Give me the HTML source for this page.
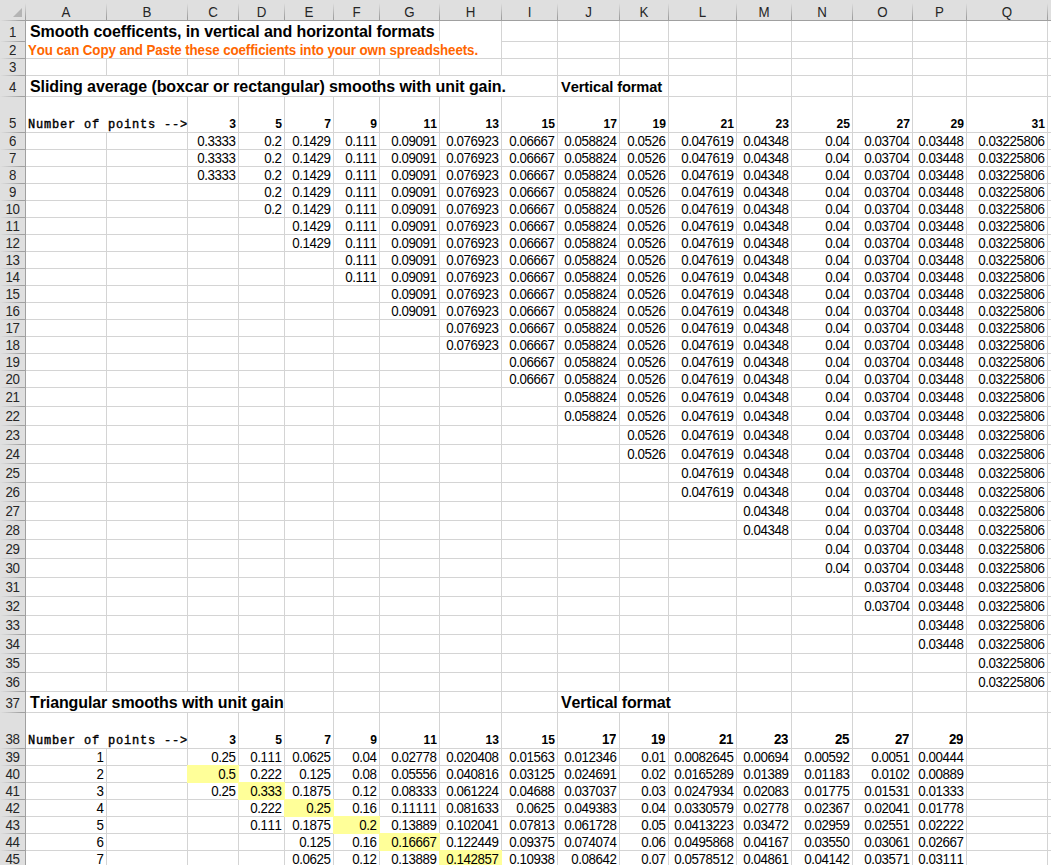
<!DOCTYPE html><html><head><meta charset="utf-8"><title>sheet</title><style>
html,body{margin:0;padding:0;background:#fff;overflow:hidden}
body{width:1051px;height:865px;position:relative;font-family:"Liberation Sans",sans-serif;color:#000;font-kerning:none;font-feature-settings:"kern" 0,"liga" 0}
div{position:absolute;white-space:nowrap;box-sizing:border-box}
.v{width:1px;background:#d4d4d4}
.h{height:1px;background:#d4d4d4}
.hv{width:1px;background:#a0a0a0}
.hh{height:1px;background:#a0a0a0}
.ch{top:3px;height:17px;font-size:13.33px;line-height:20px;text-align:center;color:#262626;transform:scaleY(1.07);transform-origin:50% 100%}
.rh{left:0;width:25px;font-size:13.33px;text-align:center;color:#262626;line-height:15px;letter-spacing:-0.41px;transform:scaleY(1.07);transform-origin:50% 100%}
.d{font-size:13.33px;line-height:15px;text-align:right;letter-spacing:-0.41px;transform:scaleY(1.07);transform-origin:50% 100%}
.cb{font-size:12.1px;font-weight:bold;line-height:15px;text-align:right;margin-top:1px}
.ab{font-size:13.33px;font-weight:bold;line-height:15px;text-align:right;letter-spacing:-0.41px;transform:scaleY(1.07);transform-origin:50% 100%}
.m{font-family:"Liberation Mono",monospace;font-weight:normal;-webkit-text-stroke:0.4px #000;font-size:12px;letter-spacing:0.8px;line-height:15px;background:#fff}
.t{font-weight:bold;font-size:16px;line-height:18px;background:#fff;letter-spacing:-0.1px}
.y{background:#ffff99}

</style></head><body>
<div class="v" style="left:106px;top:21px;height:844px"></div>
<div class="v" style="left:187px;top:21px;height:844px"></div>
<div class="v" style="left:238px;top:21px;height:844px"></div>
<div class="v" style="left:284px;top:21px;height:844px"></div>
<div class="v" style="left:333px;top:21px;height:844px"></div>
<div class="v" style="left:379px;top:21px;height:844px"></div>
<div class="v" style="left:439px;top:21px;height:844px"></div>
<div class="v" style="left:501px;top:21px;height:844px"></div>
<div class="v" style="left:557px;top:21px;height:844px"></div>
<div class="v" style="left:619px;top:21px;height:844px"></div>
<div class="v" style="left:668px;top:21px;height:844px"></div>
<div class="v" style="left:736px;top:21px;height:844px"></div>
<div class="v" style="left:791px;top:21px;height:844px"></div>
<div class="v" style="left:852px;top:21px;height:844px"></div>
<div class="v" style="left:912px;top:21px;height:844px"></div>
<div class="v" style="left:966px;top:21px;height:844px"></div>
<div class="v" style="left:1047px;top:21px;height:844px"></div>
<div class="h" style="top:41px;left:26px;width:1025px"></div>
<div class="h" style="top:58px;left:26px;width:1025px"></div>
<div class="h" style="top:75px;left:26px;width:1025px"></div>
<div class="h" style="top:96px;left:26px;width:1025px"></div>
<div class="h" style="top:132px;left:26px;width:1025px"></div>
<div class="h" style="top:149px;left:26px;width:1025px"></div>
<div class="h" style="top:166px;left:26px;width:1025px"></div>
<div class="h" style="top:183px;left:26px;width:1025px"></div>
<div class="h" style="top:200px;left:26px;width:1025px"></div>
<div class="h" style="top:217px;left:26px;width:1025px"></div>
<div class="h" style="top:234px;left:26px;width:1025px"></div>
<div class="h" style="top:251px;left:26px;width:1025px"></div>
<div class="h" style="top:268px;left:26px;width:1025px"></div>
<div class="h" style="top:285px;left:26px;width:1025px"></div>
<div class="h" style="top:302px;left:26px;width:1025px"></div>
<div class="h" style="top:319px;left:26px;width:1025px"></div>
<div class="h" style="top:336px;left:26px;width:1025px"></div>
<div class="h" style="top:353px;left:26px;width:1025px"></div>
<div class="h" style="top:370px;left:26px;width:1025px"></div>
<div class="h" style="top:387px;left:26px;width:1025px"></div>
<div class="h" style="top:406px;left:26px;width:1025px"></div>
<div class="h" style="top:425px;left:26px;width:1025px"></div>
<div class="h" style="top:444px;left:26px;width:1025px"></div>
<div class="h" style="top:463px;left:26px;width:1025px"></div>
<div class="h" style="top:482px;left:26px;width:1025px"></div>
<div class="h" style="top:501px;left:26px;width:1025px"></div>
<div class="h" style="top:520px;left:26px;width:1025px"></div>
<div class="h" style="top:539px;left:26px;width:1025px"></div>
<div class="h" style="top:558px;left:26px;width:1025px"></div>
<div class="h" style="top:577px;left:26px;width:1025px"></div>
<div class="h" style="top:596px;left:26px;width:1025px"></div>
<div class="h" style="top:615px;left:26px;width:1025px"></div>
<div class="h" style="top:634px;left:26px;width:1025px"></div>
<div class="h" style="top:653px;left:26px;width:1025px"></div>
<div class="h" style="top:672px;left:26px;width:1025px"></div>
<div class="h" style="top:691px;left:26px;width:1025px"></div>
<div class="h" style="top:712px;left:26px;width:1025px"></div>
<div class="h" style="top:748px;left:26px;width:1025px"></div>
<div class="h" style="top:765px;left:26px;width:1025px"></div>
<div class="h" style="top:782px;left:26px;width:1025px"></div>
<div class="h" style="top:799px;left:26px;width:1025px"></div>
<div class="h" style="top:816px;left:26px;width:1025px"></div>
<div class="h" style="top:833px;left:26px;width:1025px"></div>
<div class="h" style="top:850px;left:26px;width:1025px"></div>
<div style="left:0;top:0;width:1051px;height:20px;background:#dfdfdf"></div>
<div style="left:0;top:0;width:25px;height:865px;background:#dfdfdf"></div>
<div class="hh" style="left:25px;top:20px;width:1026px"></div>
<div style="left:0;top:20px;width:25px;height:1px;background:linear-gradient(to right,#dfdfdf,#a0a0a0 85%)"></div>
<div class="hv" style="left:25px;top:20px;height:845px"></div>
<div style="left:25px;top:3px;width:1px;height:17px;background:linear-gradient(to bottom,#dfdfdf,#a0a0a0 85%)"></div>
<div style="left:106px;top:3px;width:1px;height:17px;background:linear-gradient(to bottom,#dfdfdf,#a0a0a0 85%)"></div>
<div style="left:187px;top:3px;width:1px;height:17px;background:linear-gradient(to bottom,#dfdfdf,#a0a0a0 85%)"></div>
<div style="left:238px;top:3px;width:1px;height:17px;background:linear-gradient(to bottom,#dfdfdf,#a0a0a0 85%)"></div>
<div style="left:284px;top:3px;width:1px;height:17px;background:linear-gradient(to bottom,#dfdfdf,#a0a0a0 85%)"></div>
<div style="left:333px;top:3px;width:1px;height:17px;background:linear-gradient(to bottom,#dfdfdf,#a0a0a0 85%)"></div>
<div style="left:379px;top:3px;width:1px;height:17px;background:linear-gradient(to bottom,#dfdfdf,#a0a0a0 85%)"></div>
<div style="left:439px;top:3px;width:1px;height:17px;background:linear-gradient(to bottom,#dfdfdf,#a0a0a0 85%)"></div>
<div style="left:501px;top:3px;width:1px;height:17px;background:linear-gradient(to bottom,#dfdfdf,#a0a0a0 85%)"></div>
<div style="left:557px;top:3px;width:1px;height:17px;background:linear-gradient(to bottom,#dfdfdf,#a0a0a0 85%)"></div>
<div style="left:619px;top:3px;width:1px;height:17px;background:linear-gradient(to bottom,#dfdfdf,#a0a0a0 85%)"></div>
<div style="left:668px;top:3px;width:1px;height:17px;background:linear-gradient(to bottom,#dfdfdf,#a0a0a0 85%)"></div>
<div style="left:736px;top:3px;width:1px;height:17px;background:linear-gradient(to bottom,#dfdfdf,#a0a0a0 85%)"></div>
<div style="left:791px;top:3px;width:1px;height:17px;background:linear-gradient(to bottom,#dfdfdf,#a0a0a0 85%)"></div>
<div style="left:852px;top:3px;width:1px;height:17px;background:linear-gradient(to bottom,#dfdfdf,#a0a0a0 85%)"></div>
<div style="left:912px;top:3px;width:1px;height:17px;background:linear-gradient(to bottom,#dfdfdf,#a0a0a0 85%)"></div>
<div style="left:966px;top:3px;width:1px;height:17px;background:linear-gradient(to bottom,#dfdfdf,#a0a0a0 85%)"></div>
<div style="left:1047px;top:3px;width:1px;height:17px;background:linear-gradient(to bottom,#dfdfdf,#a0a0a0 85%)"></div>
<div style="left:0;top:41px;width:25px;height:1px;background:linear-gradient(to right,#dfdfdf,#a0a0a0 85%)"></div>
<div style="left:0;top:58px;width:25px;height:1px;background:linear-gradient(to right,#dfdfdf,#a0a0a0 85%)"></div>
<div style="left:0;top:75px;width:25px;height:1px;background:linear-gradient(to right,#dfdfdf,#a0a0a0 85%)"></div>
<div style="left:0;top:96px;width:25px;height:1px;background:linear-gradient(to right,#dfdfdf,#a0a0a0 85%)"></div>
<div style="left:0;top:132px;width:25px;height:1px;background:linear-gradient(to right,#dfdfdf,#a0a0a0 85%)"></div>
<div style="left:0;top:149px;width:25px;height:1px;background:linear-gradient(to right,#dfdfdf,#a0a0a0 85%)"></div>
<div style="left:0;top:166px;width:25px;height:1px;background:linear-gradient(to right,#dfdfdf,#a0a0a0 85%)"></div>
<div style="left:0;top:183px;width:25px;height:1px;background:linear-gradient(to right,#dfdfdf,#a0a0a0 85%)"></div>
<div style="left:0;top:200px;width:25px;height:1px;background:linear-gradient(to right,#dfdfdf,#a0a0a0 85%)"></div>
<div style="left:0;top:217px;width:25px;height:1px;background:linear-gradient(to right,#dfdfdf,#a0a0a0 85%)"></div>
<div style="left:0;top:234px;width:25px;height:1px;background:linear-gradient(to right,#dfdfdf,#a0a0a0 85%)"></div>
<div style="left:0;top:251px;width:25px;height:1px;background:linear-gradient(to right,#dfdfdf,#a0a0a0 85%)"></div>
<div style="left:0;top:268px;width:25px;height:1px;background:linear-gradient(to right,#dfdfdf,#a0a0a0 85%)"></div>
<div style="left:0;top:285px;width:25px;height:1px;background:linear-gradient(to right,#dfdfdf,#a0a0a0 85%)"></div>
<div style="left:0;top:302px;width:25px;height:1px;background:linear-gradient(to right,#dfdfdf,#a0a0a0 85%)"></div>
<div style="left:0;top:319px;width:25px;height:1px;background:linear-gradient(to right,#dfdfdf,#a0a0a0 85%)"></div>
<div style="left:0;top:336px;width:25px;height:1px;background:linear-gradient(to right,#dfdfdf,#a0a0a0 85%)"></div>
<div style="left:0;top:353px;width:25px;height:1px;background:linear-gradient(to right,#dfdfdf,#a0a0a0 85%)"></div>
<div style="left:0;top:370px;width:25px;height:1px;background:linear-gradient(to right,#dfdfdf,#a0a0a0 85%)"></div>
<div style="left:0;top:387px;width:25px;height:1px;background:linear-gradient(to right,#dfdfdf,#a0a0a0 85%)"></div>
<div style="left:0;top:406px;width:25px;height:1px;background:linear-gradient(to right,#dfdfdf,#a0a0a0 85%)"></div>
<div style="left:0;top:425px;width:25px;height:1px;background:linear-gradient(to right,#dfdfdf,#a0a0a0 85%)"></div>
<div style="left:0;top:444px;width:25px;height:1px;background:linear-gradient(to right,#dfdfdf,#a0a0a0 85%)"></div>
<div style="left:0;top:463px;width:25px;height:1px;background:linear-gradient(to right,#dfdfdf,#a0a0a0 85%)"></div>
<div style="left:0;top:482px;width:25px;height:1px;background:linear-gradient(to right,#dfdfdf,#a0a0a0 85%)"></div>
<div style="left:0;top:501px;width:25px;height:1px;background:linear-gradient(to right,#dfdfdf,#a0a0a0 85%)"></div>
<div style="left:0;top:520px;width:25px;height:1px;background:linear-gradient(to right,#dfdfdf,#a0a0a0 85%)"></div>
<div style="left:0;top:539px;width:25px;height:1px;background:linear-gradient(to right,#dfdfdf,#a0a0a0 85%)"></div>
<div style="left:0;top:558px;width:25px;height:1px;background:linear-gradient(to right,#dfdfdf,#a0a0a0 85%)"></div>
<div style="left:0;top:577px;width:25px;height:1px;background:linear-gradient(to right,#dfdfdf,#a0a0a0 85%)"></div>
<div style="left:0;top:596px;width:25px;height:1px;background:linear-gradient(to right,#dfdfdf,#a0a0a0 85%)"></div>
<div style="left:0;top:615px;width:25px;height:1px;background:linear-gradient(to right,#dfdfdf,#a0a0a0 85%)"></div>
<div style="left:0;top:634px;width:25px;height:1px;background:linear-gradient(to right,#dfdfdf,#a0a0a0 85%)"></div>
<div style="left:0;top:653px;width:25px;height:1px;background:linear-gradient(to right,#dfdfdf,#a0a0a0 85%)"></div>
<div style="left:0;top:672px;width:25px;height:1px;background:linear-gradient(to right,#dfdfdf,#a0a0a0 85%)"></div>
<div style="left:0;top:691px;width:25px;height:1px;background:linear-gradient(to right,#dfdfdf,#a0a0a0 85%)"></div>
<div style="left:0;top:712px;width:25px;height:1px;background:linear-gradient(to right,#dfdfdf,#a0a0a0 85%)"></div>
<div style="left:0;top:748px;width:25px;height:1px;background:linear-gradient(to right,#dfdfdf,#a0a0a0 85%)"></div>
<div style="left:0;top:765px;width:25px;height:1px;background:linear-gradient(to right,#dfdfdf,#a0a0a0 85%)"></div>
<div style="left:0;top:782px;width:25px;height:1px;background:linear-gradient(to right,#dfdfdf,#a0a0a0 85%)"></div>
<div style="left:0;top:799px;width:25px;height:1px;background:linear-gradient(to right,#dfdfdf,#a0a0a0 85%)"></div>
<div style="left:0;top:816px;width:25px;height:1px;background:linear-gradient(to right,#dfdfdf,#a0a0a0 85%)"></div>
<div style="left:0;top:833px;width:25px;height:1px;background:linear-gradient(to right,#dfdfdf,#a0a0a0 85%)"></div>
<div style="left:0;top:850px;width:25px;height:1px;background:linear-gradient(to right,#dfdfdf,#a0a0a0 85%)"></div>
<svg style="position:absolute;left:13px;top:8px" width="10" height="10"><path d="M9 0 L9 9 L0 9 Z" fill="#b4b4b4"/></svg>
<div class="ch" style="left:26px;width:80px">A</div>
<div class="ch" style="left:107px;width:80px">B</div>
<div class="ch" style="left:188px;width:50px">C</div>
<div class="ch" style="left:239px;width:45px">D</div>
<div class="ch" style="left:285px;width:48px">E</div>
<div class="ch" style="left:334px;width:45px">F</div>
<div class="ch" style="left:380px;width:59px">G</div>
<div class="ch" style="left:440px;width:61px">H</div>
<div class="ch" style="left:502px;width:55px">I</div>
<div class="ch" style="left:558px;width:61px">J</div>
<div class="ch" style="left:620px;width:48px">K</div>
<div class="ch" style="left:669px;width:67px">L</div>
<div class="ch" style="left:737px;width:54px">M</div>
<div class="ch" style="left:792px;width:60px">N</div>
<div class="ch" style="left:853px;width:59px">O</div>
<div class="ch" style="left:913px;width:53px">P</div>
<div class="ch" style="left:967px;width:80px">Q</div>
<div class="rh" style="top:25px;height:15px">1</div>
<div class="rh" style="top:43px;height:15px">2</div>
<div class="rh" style="top:60px;height:15px">3</div>
<div class="rh" style="top:80px;height:15px">4</div>
<div class="rh" style="top:116px;height:15px">5</div>
<div class="rh" style="top:134px;height:15px">6</div>
<div class="rh" style="top:151px;height:15px">7</div>
<div class="rh" style="top:168px;height:15px">8</div>
<div class="rh" style="top:185px;height:15px">9</div>
<div class="rh" style="top:202px;height:15px">10</div>
<div class="rh" style="top:219px;height:15px">11</div>
<div class="rh" style="top:236px;height:15px">12</div>
<div class="rh" style="top:253px;height:15px">13</div>
<div class="rh" style="top:270px;height:15px">14</div>
<div class="rh" style="top:287px;height:15px">15</div>
<div class="rh" style="top:304px;height:15px">16</div>
<div class="rh" style="top:321px;height:15px">17</div>
<div class="rh" style="top:338px;height:15px">18</div>
<div class="rh" style="top:355px;height:15px">19</div>
<div class="rh" style="top:372px;height:15px">20</div>
<div class="rh" style="top:390px;height:15px">21</div>
<div class="rh" style="top:409px;height:15px">22</div>
<div class="rh" style="top:428px;height:15px">23</div>
<div class="rh" style="top:447px;height:15px">24</div>
<div class="rh" style="top:466px;height:15px">25</div>
<div class="rh" style="top:485px;height:15px">26</div>
<div class="rh" style="top:504px;height:15px">27</div>
<div class="rh" style="top:523px;height:15px">28</div>
<div class="rh" style="top:542px;height:15px">29</div>
<div class="rh" style="top:561px;height:15px">30</div>
<div class="rh" style="top:580px;height:15px">31</div>
<div class="rh" style="top:599px;height:15px">32</div>
<div class="rh" style="top:618px;height:15px">33</div>
<div class="rh" style="top:637px;height:15px">34</div>
<div class="rh" style="top:656px;height:15px">35</div>
<div class="rh" style="top:675px;height:15px">36</div>
<div class="rh" style="top:696px;height:15px">37</div>
<div class="rh" style="top:732px;height:15px">38</div>
<div class="rh" style="top:750px;height:15px">39</div>
<div class="rh" style="top:767px;height:15px">40</div>
<div class="rh" style="top:784px;height:15px">41</div>
<div class="rh" style="top:801px;height:15px">42</div>
<div class="rh" style="top:818px;height:15px">43</div>
<div class="rh" style="top:835px;height:15px">44</div>
<div class="rh" style="top:852px;height:15px">45</div>
<div class="t" style="left:26px;width:413px;top:21px;height:20px;padding-left:4px;padding-top:2px;letter-spacing:-0.082px">Smooth coefficents, in vertical and horizontal formats</div>
<div class="t" style="left:26px;width:475px;top:42px;height:16px;padding-left:2px;font-size:13.33px;color:#ff6600;line-height:15px;padding-top:1px;letter-spacing:-0.09px;transform:scaleY(1.07);transform-origin:50% 100%">You can Copy and Paste these coefficients into your own spreadsheets.</div>
<div class="t" style="left:26px;width:531px;top:76px;height:20px;padding-left:4px;padding-top:2px;letter-spacing:-0.082px">Sliding average (boxcar or rectangular) smooths with unit gain.</div>
<div class="t" style="left:558px;width:110px;top:76px;height:20px;padding-left:3px;font-size:14.67px;padding-top:2px">Vertical format</div>
<div class="t" style="left:26px;width:258px;top:692px;height:20px;padding-left:4px;padding-top:2px;letter-spacing:-0.1px">Triangular smooths with unit gain</div>
<div class="t" style="left:558px;width:178px;top:692px;height:20px;padding-left:3px;padding-top:2px;letter-spacing:-0.16px">Vertical format</div>
<div class="m" style="left:26px;width:161px;top:97px;height:35px;padding-left:2px;padding-top:21px">Number of points --&gt;</div>
<div class="m" style="left:26px;width:161px;top:713px;height:35px;padding-left:2px;padding-top:21px">Number of points --&gt;</div>
<div class="cb" style="left:188px;width:50px;top:97px;height:35px;padding-right:2px;padding-top:19px">3</div>
<div class="d" style="left:188px;width:50px;top:133px;height:16px;padding-right:2.4px;padding-top:1px">0.3333</div>
<div class="d" style="left:188px;width:50px;top:150px;height:16px;padding-right:2.4px;padding-top:1px">0.3333</div>
<div class="d" style="left:188px;width:50px;top:167px;height:16px;padding-right:2.4px;padding-top:1px">0.3333</div>
<div class="cb" style="left:239px;width:45px;top:97px;height:35px;padding-right:2px;padding-top:19px">5</div>
<div class="d" style="left:239px;width:45px;top:133px;height:16px;padding-right:2.4px;padding-top:1px">0.2</div>
<div class="d" style="left:239px;width:45px;top:150px;height:16px;padding-right:2.4px;padding-top:1px">0.2</div>
<div class="d" style="left:239px;width:45px;top:167px;height:16px;padding-right:2.4px;padding-top:1px">0.2</div>
<div class="d" style="left:239px;width:45px;top:184px;height:16px;padding-right:2.4px;padding-top:1px">0.2</div>
<div class="d" style="left:239px;width:45px;top:201px;height:16px;padding-right:2.4px;padding-top:1px">0.2</div>
<div class="cb" style="left:285px;width:48px;top:97px;height:35px;padding-right:2px;padding-top:19px">7</div>
<div class="d" style="left:285px;width:48px;top:133px;height:16px;padding-right:2.4px;padding-top:1px">0.1429</div>
<div class="d" style="left:285px;width:48px;top:150px;height:16px;padding-right:2.4px;padding-top:1px">0.1429</div>
<div class="d" style="left:285px;width:48px;top:167px;height:16px;padding-right:2.4px;padding-top:1px">0.1429</div>
<div class="d" style="left:285px;width:48px;top:184px;height:16px;padding-right:2.4px;padding-top:1px">0.1429</div>
<div class="d" style="left:285px;width:48px;top:201px;height:16px;padding-right:2.4px;padding-top:1px">0.1429</div>
<div class="d" style="left:285px;width:48px;top:218px;height:16px;padding-right:2.4px;padding-top:1px">0.1429</div>
<div class="d" style="left:285px;width:48px;top:235px;height:16px;padding-right:2.4px;padding-top:1px">0.1429</div>
<div class="cb" style="left:334px;width:45px;top:97px;height:35px;padding-right:2px;padding-top:19px">9</div>
<div class="d" style="left:334px;width:45px;top:133px;height:16px;padding-right:2.4px;padding-top:1px">0.111</div>
<div class="d" style="left:334px;width:45px;top:150px;height:16px;padding-right:2.4px;padding-top:1px">0.111</div>
<div class="d" style="left:334px;width:45px;top:167px;height:16px;padding-right:2.4px;padding-top:1px">0.111</div>
<div class="d" style="left:334px;width:45px;top:184px;height:16px;padding-right:2.4px;padding-top:1px">0.111</div>
<div class="d" style="left:334px;width:45px;top:201px;height:16px;padding-right:2.4px;padding-top:1px">0.111</div>
<div class="d" style="left:334px;width:45px;top:218px;height:16px;padding-right:2.4px;padding-top:1px">0.111</div>
<div class="d" style="left:334px;width:45px;top:235px;height:16px;padding-right:2.4px;padding-top:1px">0.111</div>
<div class="d" style="left:334px;width:45px;top:252px;height:16px;padding-right:2.4px;padding-top:1px">0.111</div>
<div class="d" style="left:334px;width:45px;top:269px;height:16px;padding-right:2.4px;padding-top:1px">0.111</div>
<div class="cb" style="left:380px;width:59px;top:97px;height:35px;padding-right:2px;padding-top:19px">11</div>
<div class="d" style="left:380px;width:59px;top:133px;height:16px;padding-right:2.4px;padding-top:1px">0.09091</div>
<div class="d" style="left:380px;width:59px;top:150px;height:16px;padding-right:2.4px;padding-top:1px">0.09091</div>
<div class="d" style="left:380px;width:59px;top:167px;height:16px;padding-right:2.4px;padding-top:1px">0.09091</div>
<div class="d" style="left:380px;width:59px;top:184px;height:16px;padding-right:2.4px;padding-top:1px">0.09091</div>
<div class="d" style="left:380px;width:59px;top:201px;height:16px;padding-right:2.4px;padding-top:1px">0.09091</div>
<div class="d" style="left:380px;width:59px;top:218px;height:16px;padding-right:2.4px;padding-top:1px">0.09091</div>
<div class="d" style="left:380px;width:59px;top:235px;height:16px;padding-right:2.4px;padding-top:1px">0.09091</div>
<div class="d" style="left:380px;width:59px;top:252px;height:16px;padding-right:2.4px;padding-top:1px">0.09091</div>
<div class="d" style="left:380px;width:59px;top:269px;height:16px;padding-right:2.4px;padding-top:1px">0.09091</div>
<div class="d" style="left:380px;width:59px;top:286px;height:16px;padding-right:2.4px;padding-top:1px">0.09091</div>
<div class="d" style="left:380px;width:59px;top:303px;height:16px;padding-right:2.4px;padding-top:1px">0.09091</div>
<div class="cb" style="left:440px;width:61px;top:97px;height:35px;padding-right:2px;padding-top:19px">13</div>
<div class="d" style="left:440px;width:61px;top:133px;height:16px;padding-right:2.4px;padding-top:1px">0.076923</div>
<div class="d" style="left:440px;width:61px;top:150px;height:16px;padding-right:2.4px;padding-top:1px">0.076923</div>
<div class="d" style="left:440px;width:61px;top:167px;height:16px;padding-right:2.4px;padding-top:1px">0.076923</div>
<div class="d" style="left:440px;width:61px;top:184px;height:16px;padding-right:2.4px;padding-top:1px">0.076923</div>
<div class="d" style="left:440px;width:61px;top:201px;height:16px;padding-right:2.4px;padding-top:1px">0.076923</div>
<div class="d" style="left:440px;width:61px;top:218px;height:16px;padding-right:2.4px;padding-top:1px">0.076923</div>
<div class="d" style="left:440px;width:61px;top:235px;height:16px;padding-right:2.4px;padding-top:1px">0.076923</div>
<div class="d" style="left:440px;width:61px;top:252px;height:16px;padding-right:2.4px;padding-top:1px">0.076923</div>
<div class="d" style="left:440px;width:61px;top:269px;height:16px;padding-right:2.4px;padding-top:1px">0.076923</div>
<div class="d" style="left:440px;width:61px;top:286px;height:16px;padding-right:2.4px;padding-top:1px">0.076923</div>
<div class="d" style="left:440px;width:61px;top:303px;height:16px;padding-right:2.4px;padding-top:1px">0.076923</div>
<div class="d" style="left:440px;width:61px;top:320px;height:16px;padding-right:2.4px;padding-top:1px">0.076923</div>
<div class="d" style="left:440px;width:61px;top:337px;height:16px;padding-right:2.4px;padding-top:1px">0.076923</div>
<div class="cb" style="left:502px;width:55px;top:97px;height:35px;padding-right:2px;padding-top:19px">15</div>
<div class="d" style="left:502px;width:55px;top:133px;height:16px;padding-right:2.4px;padding-top:1px">0.06667</div>
<div class="d" style="left:502px;width:55px;top:150px;height:16px;padding-right:2.4px;padding-top:1px">0.06667</div>
<div class="d" style="left:502px;width:55px;top:167px;height:16px;padding-right:2.4px;padding-top:1px">0.06667</div>
<div class="d" style="left:502px;width:55px;top:184px;height:16px;padding-right:2.4px;padding-top:1px">0.06667</div>
<div class="d" style="left:502px;width:55px;top:201px;height:16px;padding-right:2.4px;padding-top:1px">0.06667</div>
<div class="d" style="left:502px;width:55px;top:218px;height:16px;padding-right:2.4px;padding-top:1px">0.06667</div>
<div class="d" style="left:502px;width:55px;top:235px;height:16px;padding-right:2.4px;padding-top:1px">0.06667</div>
<div class="d" style="left:502px;width:55px;top:252px;height:16px;padding-right:2.4px;padding-top:1px">0.06667</div>
<div class="d" style="left:502px;width:55px;top:269px;height:16px;padding-right:2.4px;padding-top:1px">0.06667</div>
<div class="d" style="left:502px;width:55px;top:286px;height:16px;padding-right:2.4px;padding-top:1px">0.06667</div>
<div class="d" style="left:502px;width:55px;top:303px;height:16px;padding-right:2.4px;padding-top:1px">0.06667</div>
<div class="d" style="left:502px;width:55px;top:320px;height:16px;padding-right:2.4px;padding-top:1px">0.06667</div>
<div class="d" style="left:502px;width:55px;top:337px;height:16px;padding-right:2.4px;padding-top:1px">0.06667</div>
<div class="d" style="left:502px;width:55px;top:354px;height:16px;padding-right:2.4px;padding-top:1px">0.06667</div>
<div class="d" style="left:502px;width:55px;top:371px;height:16px;padding-right:2.4px;padding-top:1px">0.06667</div>
<div class="cb" style="left:558px;width:61px;top:97px;height:35px;padding-right:2px;padding-top:19px">17</div>
<div class="d" style="left:558px;width:61px;top:133px;height:16px;padding-right:2.4px;padding-top:1px">0.058824</div>
<div class="d" style="left:558px;width:61px;top:150px;height:16px;padding-right:2.4px;padding-top:1px">0.058824</div>
<div class="d" style="left:558px;width:61px;top:167px;height:16px;padding-right:2.4px;padding-top:1px">0.058824</div>
<div class="d" style="left:558px;width:61px;top:184px;height:16px;padding-right:2.4px;padding-top:1px">0.058824</div>
<div class="d" style="left:558px;width:61px;top:201px;height:16px;padding-right:2.4px;padding-top:1px">0.058824</div>
<div class="d" style="left:558px;width:61px;top:218px;height:16px;padding-right:2.4px;padding-top:1px">0.058824</div>
<div class="d" style="left:558px;width:61px;top:235px;height:16px;padding-right:2.4px;padding-top:1px">0.058824</div>
<div class="d" style="left:558px;width:61px;top:252px;height:16px;padding-right:2.4px;padding-top:1px">0.058824</div>
<div class="d" style="left:558px;width:61px;top:269px;height:16px;padding-right:2.4px;padding-top:1px">0.058824</div>
<div class="d" style="left:558px;width:61px;top:286px;height:16px;padding-right:2.4px;padding-top:1px">0.058824</div>
<div class="d" style="left:558px;width:61px;top:303px;height:16px;padding-right:2.4px;padding-top:1px">0.058824</div>
<div class="d" style="left:558px;width:61px;top:320px;height:16px;padding-right:2.4px;padding-top:1px">0.058824</div>
<div class="d" style="left:558px;width:61px;top:337px;height:16px;padding-right:2.4px;padding-top:1px">0.058824</div>
<div class="d" style="left:558px;width:61px;top:354px;height:16px;padding-right:2.4px;padding-top:1px">0.058824</div>
<div class="d" style="left:558px;width:61px;top:371px;height:16px;padding-right:2.4px;padding-top:1px">0.058824</div>
<div class="d" style="left:558px;width:61px;top:388px;height:18px;padding-right:2.4px;padding-top:2px">0.058824</div>
<div class="d" style="left:558px;width:61px;top:407px;height:18px;padding-right:2.4px;padding-top:2px">0.058824</div>
<div class="cb" style="left:620px;width:48px;top:97px;height:35px;padding-right:2px;padding-top:19px">19</div>
<div class="d" style="left:620px;width:48px;top:133px;height:16px;padding-right:2.4px;padding-top:1px">0.0526</div>
<div class="d" style="left:620px;width:48px;top:150px;height:16px;padding-right:2.4px;padding-top:1px">0.0526</div>
<div class="d" style="left:620px;width:48px;top:167px;height:16px;padding-right:2.4px;padding-top:1px">0.0526</div>
<div class="d" style="left:620px;width:48px;top:184px;height:16px;padding-right:2.4px;padding-top:1px">0.0526</div>
<div class="d" style="left:620px;width:48px;top:201px;height:16px;padding-right:2.4px;padding-top:1px">0.0526</div>
<div class="d" style="left:620px;width:48px;top:218px;height:16px;padding-right:2.4px;padding-top:1px">0.0526</div>
<div class="d" style="left:620px;width:48px;top:235px;height:16px;padding-right:2.4px;padding-top:1px">0.0526</div>
<div class="d" style="left:620px;width:48px;top:252px;height:16px;padding-right:2.4px;padding-top:1px">0.0526</div>
<div class="d" style="left:620px;width:48px;top:269px;height:16px;padding-right:2.4px;padding-top:1px">0.0526</div>
<div class="d" style="left:620px;width:48px;top:286px;height:16px;padding-right:2.4px;padding-top:1px">0.0526</div>
<div class="d" style="left:620px;width:48px;top:303px;height:16px;padding-right:2.4px;padding-top:1px">0.0526</div>
<div class="d" style="left:620px;width:48px;top:320px;height:16px;padding-right:2.4px;padding-top:1px">0.0526</div>
<div class="d" style="left:620px;width:48px;top:337px;height:16px;padding-right:2.4px;padding-top:1px">0.0526</div>
<div class="d" style="left:620px;width:48px;top:354px;height:16px;padding-right:2.4px;padding-top:1px">0.0526</div>
<div class="d" style="left:620px;width:48px;top:371px;height:16px;padding-right:2.4px;padding-top:1px">0.0526</div>
<div class="d" style="left:620px;width:48px;top:388px;height:18px;padding-right:2.4px;padding-top:2px">0.0526</div>
<div class="d" style="left:620px;width:48px;top:407px;height:18px;padding-right:2.4px;padding-top:2px">0.0526</div>
<div class="d" style="left:620px;width:48px;top:426px;height:18px;padding-right:2.4px;padding-top:2px">0.0526</div>
<div class="d" style="left:620px;width:48px;top:445px;height:18px;padding-right:2.4px;padding-top:2px">0.0526</div>
<div class="cb" style="left:669px;width:67px;top:97px;height:35px;padding-right:2px;padding-top:19px">21</div>
<div class="d" style="left:669px;width:67px;top:133px;height:16px;padding-right:2.4px;padding-top:1px">0.047619</div>
<div class="d" style="left:669px;width:67px;top:150px;height:16px;padding-right:2.4px;padding-top:1px">0.047619</div>
<div class="d" style="left:669px;width:67px;top:167px;height:16px;padding-right:2.4px;padding-top:1px">0.047619</div>
<div class="d" style="left:669px;width:67px;top:184px;height:16px;padding-right:2.4px;padding-top:1px">0.047619</div>
<div class="d" style="left:669px;width:67px;top:201px;height:16px;padding-right:2.4px;padding-top:1px">0.047619</div>
<div class="d" style="left:669px;width:67px;top:218px;height:16px;padding-right:2.4px;padding-top:1px">0.047619</div>
<div class="d" style="left:669px;width:67px;top:235px;height:16px;padding-right:2.4px;padding-top:1px">0.047619</div>
<div class="d" style="left:669px;width:67px;top:252px;height:16px;padding-right:2.4px;padding-top:1px">0.047619</div>
<div class="d" style="left:669px;width:67px;top:269px;height:16px;padding-right:2.4px;padding-top:1px">0.047619</div>
<div class="d" style="left:669px;width:67px;top:286px;height:16px;padding-right:2.4px;padding-top:1px">0.047619</div>
<div class="d" style="left:669px;width:67px;top:303px;height:16px;padding-right:2.4px;padding-top:1px">0.047619</div>
<div class="d" style="left:669px;width:67px;top:320px;height:16px;padding-right:2.4px;padding-top:1px">0.047619</div>
<div class="d" style="left:669px;width:67px;top:337px;height:16px;padding-right:2.4px;padding-top:1px">0.047619</div>
<div class="d" style="left:669px;width:67px;top:354px;height:16px;padding-right:2.4px;padding-top:1px">0.047619</div>
<div class="d" style="left:669px;width:67px;top:371px;height:16px;padding-right:2.4px;padding-top:1px">0.047619</div>
<div class="d" style="left:669px;width:67px;top:388px;height:18px;padding-right:2.4px;padding-top:2px">0.047619</div>
<div class="d" style="left:669px;width:67px;top:407px;height:18px;padding-right:2.4px;padding-top:2px">0.047619</div>
<div class="d" style="left:669px;width:67px;top:426px;height:18px;padding-right:2.4px;padding-top:2px">0.047619</div>
<div class="d" style="left:669px;width:67px;top:445px;height:18px;padding-right:2.4px;padding-top:2px">0.047619</div>
<div class="d" style="left:669px;width:67px;top:464px;height:18px;padding-right:2.4px;padding-top:2px">0.047619</div>
<div class="d" style="left:669px;width:67px;top:483px;height:18px;padding-right:2.4px;padding-top:2px">0.047619</div>
<div class="cb" style="left:737px;width:54px;top:97px;height:35px;padding-right:2px;padding-top:19px">23</div>
<div class="d" style="left:737px;width:54px;top:133px;height:16px;padding-right:2.4px;padding-top:1px">0.04348</div>
<div class="d" style="left:737px;width:54px;top:150px;height:16px;padding-right:2.4px;padding-top:1px">0.04348</div>
<div class="d" style="left:737px;width:54px;top:167px;height:16px;padding-right:2.4px;padding-top:1px">0.04348</div>
<div class="d" style="left:737px;width:54px;top:184px;height:16px;padding-right:2.4px;padding-top:1px">0.04348</div>
<div class="d" style="left:737px;width:54px;top:201px;height:16px;padding-right:2.4px;padding-top:1px">0.04348</div>
<div class="d" style="left:737px;width:54px;top:218px;height:16px;padding-right:2.4px;padding-top:1px">0.04348</div>
<div class="d" style="left:737px;width:54px;top:235px;height:16px;padding-right:2.4px;padding-top:1px">0.04348</div>
<div class="d" style="left:737px;width:54px;top:252px;height:16px;padding-right:2.4px;padding-top:1px">0.04348</div>
<div class="d" style="left:737px;width:54px;top:269px;height:16px;padding-right:2.4px;padding-top:1px">0.04348</div>
<div class="d" style="left:737px;width:54px;top:286px;height:16px;padding-right:2.4px;padding-top:1px">0.04348</div>
<div class="d" style="left:737px;width:54px;top:303px;height:16px;padding-right:2.4px;padding-top:1px">0.04348</div>
<div class="d" style="left:737px;width:54px;top:320px;height:16px;padding-right:2.4px;padding-top:1px">0.04348</div>
<div class="d" style="left:737px;width:54px;top:337px;height:16px;padding-right:2.4px;padding-top:1px">0.04348</div>
<div class="d" style="left:737px;width:54px;top:354px;height:16px;padding-right:2.4px;padding-top:1px">0.04348</div>
<div class="d" style="left:737px;width:54px;top:371px;height:16px;padding-right:2.4px;padding-top:1px">0.04348</div>
<div class="d" style="left:737px;width:54px;top:388px;height:18px;padding-right:2.4px;padding-top:2px">0.04348</div>
<div class="d" style="left:737px;width:54px;top:407px;height:18px;padding-right:2.4px;padding-top:2px">0.04348</div>
<div class="d" style="left:737px;width:54px;top:426px;height:18px;padding-right:2.4px;padding-top:2px">0.04348</div>
<div class="d" style="left:737px;width:54px;top:445px;height:18px;padding-right:2.4px;padding-top:2px">0.04348</div>
<div class="d" style="left:737px;width:54px;top:464px;height:18px;padding-right:2.4px;padding-top:2px">0.04348</div>
<div class="d" style="left:737px;width:54px;top:483px;height:18px;padding-right:2.4px;padding-top:2px">0.04348</div>
<div class="d" style="left:737px;width:54px;top:502px;height:18px;padding-right:2.4px;padding-top:2px">0.04348</div>
<div class="d" style="left:737px;width:54px;top:521px;height:18px;padding-right:2.4px;padding-top:2px">0.04348</div>
<div class="cb" style="left:792px;width:60px;top:97px;height:35px;padding-right:2px;padding-top:19px">25</div>
<div class="d" style="left:792px;width:60px;top:133px;height:16px;padding-right:2.4px;padding-top:1px">0.04</div>
<div class="d" style="left:792px;width:60px;top:150px;height:16px;padding-right:2.4px;padding-top:1px">0.04</div>
<div class="d" style="left:792px;width:60px;top:167px;height:16px;padding-right:2.4px;padding-top:1px">0.04</div>
<div class="d" style="left:792px;width:60px;top:184px;height:16px;padding-right:2.4px;padding-top:1px">0.04</div>
<div class="d" style="left:792px;width:60px;top:201px;height:16px;padding-right:2.4px;padding-top:1px">0.04</div>
<div class="d" style="left:792px;width:60px;top:218px;height:16px;padding-right:2.4px;padding-top:1px">0.04</div>
<div class="d" style="left:792px;width:60px;top:235px;height:16px;padding-right:2.4px;padding-top:1px">0.04</div>
<div class="d" style="left:792px;width:60px;top:252px;height:16px;padding-right:2.4px;padding-top:1px">0.04</div>
<div class="d" style="left:792px;width:60px;top:269px;height:16px;padding-right:2.4px;padding-top:1px">0.04</div>
<div class="d" style="left:792px;width:60px;top:286px;height:16px;padding-right:2.4px;padding-top:1px">0.04</div>
<div class="d" style="left:792px;width:60px;top:303px;height:16px;padding-right:2.4px;padding-top:1px">0.04</div>
<div class="d" style="left:792px;width:60px;top:320px;height:16px;padding-right:2.4px;padding-top:1px">0.04</div>
<div class="d" style="left:792px;width:60px;top:337px;height:16px;padding-right:2.4px;padding-top:1px">0.04</div>
<div class="d" style="left:792px;width:60px;top:354px;height:16px;padding-right:2.4px;padding-top:1px">0.04</div>
<div class="d" style="left:792px;width:60px;top:371px;height:16px;padding-right:2.4px;padding-top:1px">0.04</div>
<div class="d" style="left:792px;width:60px;top:388px;height:18px;padding-right:2.4px;padding-top:2px">0.04</div>
<div class="d" style="left:792px;width:60px;top:407px;height:18px;padding-right:2.4px;padding-top:2px">0.04</div>
<div class="d" style="left:792px;width:60px;top:426px;height:18px;padding-right:2.4px;padding-top:2px">0.04</div>
<div class="d" style="left:792px;width:60px;top:445px;height:18px;padding-right:2.4px;padding-top:2px">0.04</div>
<div class="d" style="left:792px;width:60px;top:464px;height:18px;padding-right:2.4px;padding-top:2px">0.04</div>
<div class="d" style="left:792px;width:60px;top:483px;height:18px;padding-right:2.4px;padding-top:2px">0.04</div>
<div class="d" style="left:792px;width:60px;top:502px;height:18px;padding-right:2.4px;padding-top:2px">0.04</div>
<div class="d" style="left:792px;width:60px;top:521px;height:18px;padding-right:2.4px;padding-top:2px">0.04</div>
<div class="d" style="left:792px;width:60px;top:540px;height:18px;padding-right:2.4px;padding-top:2px">0.04</div>
<div class="d" style="left:792px;width:60px;top:559px;height:18px;padding-right:2.4px;padding-top:2px">0.04</div>
<div class="cb" style="left:853px;width:59px;top:97px;height:35px;padding-right:2px;padding-top:19px">27</div>
<div class="d" style="left:853px;width:59px;top:133px;height:16px;padding-right:2.4px;padding-top:1px">0.03704</div>
<div class="d" style="left:853px;width:59px;top:150px;height:16px;padding-right:2.4px;padding-top:1px">0.03704</div>
<div class="d" style="left:853px;width:59px;top:167px;height:16px;padding-right:2.4px;padding-top:1px">0.03704</div>
<div class="d" style="left:853px;width:59px;top:184px;height:16px;padding-right:2.4px;padding-top:1px">0.03704</div>
<div class="d" style="left:853px;width:59px;top:201px;height:16px;padding-right:2.4px;padding-top:1px">0.03704</div>
<div class="d" style="left:853px;width:59px;top:218px;height:16px;padding-right:2.4px;padding-top:1px">0.03704</div>
<div class="d" style="left:853px;width:59px;top:235px;height:16px;padding-right:2.4px;padding-top:1px">0.03704</div>
<div class="d" style="left:853px;width:59px;top:252px;height:16px;padding-right:2.4px;padding-top:1px">0.03704</div>
<div class="d" style="left:853px;width:59px;top:269px;height:16px;padding-right:2.4px;padding-top:1px">0.03704</div>
<div class="d" style="left:853px;width:59px;top:286px;height:16px;padding-right:2.4px;padding-top:1px">0.03704</div>
<div class="d" style="left:853px;width:59px;top:303px;height:16px;padding-right:2.4px;padding-top:1px">0.03704</div>
<div class="d" style="left:853px;width:59px;top:320px;height:16px;padding-right:2.4px;padding-top:1px">0.03704</div>
<div class="d" style="left:853px;width:59px;top:337px;height:16px;padding-right:2.4px;padding-top:1px">0.03704</div>
<div class="d" style="left:853px;width:59px;top:354px;height:16px;padding-right:2.4px;padding-top:1px">0.03704</div>
<div class="d" style="left:853px;width:59px;top:371px;height:16px;padding-right:2.4px;padding-top:1px">0.03704</div>
<div class="d" style="left:853px;width:59px;top:388px;height:18px;padding-right:2.4px;padding-top:2px">0.03704</div>
<div class="d" style="left:853px;width:59px;top:407px;height:18px;padding-right:2.4px;padding-top:2px">0.03704</div>
<div class="d" style="left:853px;width:59px;top:426px;height:18px;padding-right:2.4px;padding-top:2px">0.03704</div>
<div class="d" style="left:853px;width:59px;top:445px;height:18px;padding-right:2.4px;padding-top:2px">0.03704</div>
<div class="d" style="left:853px;width:59px;top:464px;height:18px;padding-right:2.4px;padding-top:2px">0.03704</div>
<div class="d" style="left:853px;width:59px;top:483px;height:18px;padding-right:2.4px;padding-top:2px">0.03704</div>
<div class="d" style="left:853px;width:59px;top:502px;height:18px;padding-right:2.4px;padding-top:2px">0.03704</div>
<div class="d" style="left:853px;width:59px;top:521px;height:18px;padding-right:2.4px;padding-top:2px">0.03704</div>
<div class="d" style="left:853px;width:59px;top:540px;height:18px;padding-right:2.4px;padding-top:2px">0.03704</div>
<div class="d" style="left:853px;width:59px;top:559px;height:18px;padding-right:2.4px;padding-top:2px">0.03704</div>
<div class="d" style="left:853px;width:59px;top:578px;height:18px;padding-right:2.4px;padding-top:2px">0.03704</div>
<div class="d" style="left:853px;width:59px;top:597px;height:18px;padding-right:2.4px;padding-top:2px">0.03704</div>
<div class="cb" style="left:913px;width:53px;top:97px;height:35px;padding-right:2px;padding-top:19px">29</div>
<div class="d" style="left:913px;width:53px;top:133px;height:16px;padding-right:2.4px;padding-top:1px">0.03448</div>
<div class="d" style="left:913px;width:53px;top:150px;height:16px;padding-right:2.4px;padding-top:1px">0.03448</div>
<div class="d" style="left:913px;width:53px;top:167px;height:16px;padding-right:2.4px;padding-top:1px">0.03448</div>
<div class="d" style="left:913px;width:53px;top:184px;height:16px;padding-right:2.4px;padding-top:1px">0.03448</div>
<div class="d" style="left:913px;width:53px;top:201px;height:16px;padding-right:2.4px;padding-top:1px">0.03448</div>
<div class="d" style="left:913px;width:53px;top:218px;height:16px;padding-right:2.4px;padding-top:1px">0.03448</div>
<div class="d" style="left:913px;width:53px;top:235px;height:16px;padding-right:2.4px;padding-top:1px">0.03448</div>
<div class="d" style="left:913px;width:53px;top:252px;height:16px;padding-right:2.4px;padding-top:1px">0.03448</div>
<div class="d" style="left:913px;width:53px;top:269px;height:16px;padding-right:2.4px;padding-top:1px">0.03448</div>
<div class="d" style="left:913px;width:53px;top:286px;height:16px;padding-right:2.4px;padding-top:1px">0.03448</div>
<div class="d" style="left:913px;width:53px;top:303px;height:16px;padding-right:2.4px;padding-top:1px">0.03448</div>
<div class="d" style="left:913px;width:53px;top:320px;height:16px;padding-right:2.4px;padding-top:1px">0.03448</div>
<div class="d" style="left:913px;width:53px;top:337px;height:16px;padding-right:2.4px;padding-top:1px">0.03448</div>
<div class="d" style="left:913px;width:53px;top:354px;height:16px;padding-right:2.4px;padding-top:1px">0.03448</div>
<div class="d" style="left:913px;width:53px;top:371px;height:16px;padding-right:2.4px;padding-top:1px">0.03448</div>
<div class="d" style="left:913px;width:53px;top:388px;height:18px;padding-right:2.4px;padding-top:2px">0.03448</div>
<div class="d" style="left:913px;width:53px;top:407px;height:18px;padding-right:2.4px;padding-top:2px">0.03448</div>
<div class="d" style="left:913px;width:53px;top:426px;height:18px;padding-right:2.4px;padding-top:2px">0.03448</div>
<div class="d" style="left:913px;width:53px;top:445px;height:18px;padding-right:2.4px;padding-top:2px">0.03448</div>
<div class="d" style="left:913px;width:53px;top:464px;height:18px;padding-right:2.4px;padding-top:2px">0.03448</div>
<div class="d" style="left:913px;width:53px;top:483px;height:18px;padding-right:2.4px;padding-top:2px">0.03448</div>
<div class="d" style="left:913px;width:53px;top:502px;height:18px;padding-right:2.4px;padding-top:2px">0.03448</div>
<div class="d" style="left:913px;width:53px;top:521px;height:18px;padding-right:2.4px;padding-top:2px">0.03448</div>
<div class="d" style="left:913px;width:53px;top:540px;height:18px;padding-right:2.4px;padding-top:2px">0.03448</div>
<div class="d" style="left:913px;width:53px;top:559px;height:18px;padding-right:2.4px;padding-top:2px">0.03448</div>
<div class="d" style="left:913px;width:53px;top:578px;height:18px;padding-right:2.4px;padding-top:2px">0.03448</div>
<div class="d" style="left:913px;width:53px;top:597px;height:18px;padding-right:2.4px;padding-top:2px">0.03448</div>
<div class="d" style="left:913px;width:53px;top:616px;height:18px;padding-right:2.4px;padding-top:2px">0.03448</div>
<div class="d" style="left:913px;width:53px;top:635px;height:18px;padding-right:2.4px;padding-top:2px">0.03448</div>
<div class="cb" style="left:967px;width:80px;top:97px;height:35px;padding-right:2px;padding-top:19px">31</div>
<div class="d" style="left:967px;width:80px;top:133px;height:16px;padding-right:2.4px;padding-top:1px">0.03225806</div>
<div class="d" style="left:967px;width:80px;top:150px;height:16px;padding-right:2.4px;padding-top:1px">0.03225806</div>
<div class="d" style="left:967px;width:80px;top:167px;height:16px;padding-right:2.4px;padding-top:1px">0.03225806</div>
<div class="d" style="left:967px;width:80px;top:184px;height:16px;padding-right:2.4px;padding-top:1px">0.03225806</div>
<div class="d" style="left:967px;width:80px;top:201px;height:16px;padding-right:2.4px;padding-top:1px">0.03225806</div>
<div class="d" style="left:967px;width:80px;top:218px;height:16px;padding-right:2.4px;padding-top:1px">0.03225806</div>
<div class="d" style="left:967px;width:80px;top:235px;height:16px;padding-right:2.4px;padding-top:1px">0.03225806</div>
<div class="d" style="left:967px;width:80px;top:252px;height:16px;padding-right:2.4px;padding-top:1px">0.03225806</div>
<div class="d" style="left:967px;width:80px;top:269px;height:16px;padding-right:2.4px;padding-top:1px">0.03225806</div>
<div class="d" style="left:967px;width:80px;top:286px;height:16px;padding-right:2.4px;padding-top:1px">0.03225806</div>
<div class="d" style="left:967px;width:80px;top:303px;height:16px;padding-right:2.4px;padding-top:1px">0.03225806</div>
<div class="d" style="left:967px;width:80px;top:320px;height:16px;padding-right:2.4px;padding-top:1px">0.03225806</div>
<div class="d" style="left:967px;width:80px;top:337px;height:16px;padding-right:2.4px;padding-top:1px">0.03225806</div>
<div class="d" style="left:967px;width:80px;top:354px;height:16px;padding-right:2.4px;padding-top:1px">0.03225806</div>
<div class="d" style="left:967px;width:80px;top:371px;height:16px;padding-right:2.4px;padding-top:1px">0.03225806</div>
<div class="d" style="left:967px;width:80px;top:388px;height:18px;padding-right:2.4px;padding-top:2px">0.03225806</div>
<div class="d" style="left:967px;width:80px;top:407px;height:18px;padding-right:2.4px;padding-top:2px">0.03225806</div>
<div class="d" style="left:967px;width:80px;top:426px;height:18px;padding-right:2.4px;padding-top:2px">0.03225806</div>
<div class="d" style="left:967px;width:80px;top:445px;height:18px;padding-right:2.4px;padding-top:2px">0.03225806</div>
<div class="d" style="left:967px;width:80px;top:464px;height:18px;padding-right:2.4px;padding-top:2px">0.03225806</div>
<div class="d" style="left:967px;width:80px;top:483px;height:18px;padding-right:2.4px;padding-top:2px">0.03225806</div>
<div class="d" style="left:967px;width:80px;top:502px;height:18px;padding-right:2.4px;padding-top:2px">0.03225806</div>
<div class="d" style="left:967px;width:80px;top:521px;height:18px;padding-right:2.4px;padding-top:2px">0.03225806</div>
<div class="d" style="left:967px;width:80px;top:540px;height:18px;padding-right:2.4px;padding-top:2px">0.03225806</div>
<div class="d" style="left:967px;width:80px;top:559px;height:18px;padding-right:2.4px;padding-top:2px">0.03225806</div>
<div class="d" style="left:967px;width:80px;top:578px;height:18px;padding-right:2.4px;padding-top:2px">0.03225806</div>
<div class="d" style="left:967px;width:80px;top:597px;height:18px;padding-right:2.4px;padding-top:2px">0.03225806</div>
<div class="d" style="left:967px;width:80px;top:616px;height:18px;padding-right:2.4px;padding-top:2px">0.03225806</div>
<div class="d" style="left:967px;width:80px;top:635px;height:18px;padding-right:2.4px;padding-top:2px">0.03225806</div>
<div class="d" style="left:967px;width:80px;top:654px;height:18px;padding-right:2.4px;padding-top:2px">0.03225806</div>
<div class="d" style="left:967px;width:80px;top:673px;height:18px;padding-right:2.4px;padding-top:2px">0.03225806</div>
<div class="cb" style="left:188px;width:50px;top:713px;height:35px;padding-right:2px;padding-top:19px">3</div>
<div class="cb" style="left:239px;width:45px;top:713px;height:35px;padding-right:2px;padding-top:19px">5</div>
<div class="cb" style="left:285px;width:48px;top:713px;height:35px;padding-right:2px;padding-top:19px">7</div>
<div class="cb" style="left:334px;width:45px;top:713px;height:35px;padding-right:2px;padding-top:19px">9</div>
<div class="cb" style="left:380px;width:59px;top:713px;height:35px;padding-right:2px;padding-top:19px">11</div>
<div class="cb" style="left:440px;width:61px;top:713px;height:35px;padding-right:2px;padding-top:19px">13</div>
<div class="cb" style="left:502px;width:55px;top:713px;height:35px;padding-right:2px;padding-top:19px">15</div>
<div class="ab" style="left:558px;width:61px;top:713px;height:35px;padding-right:3px;padding-top:19px">17</div>
<div class="ab" style="left:620px;width:48px;top:713px;height:35px;padding-right:3px;padding-top:19px">19</div>
<div class="ab" style="left:669px;width:67px;top:713px;height:35px;padding-right:3px;padding-top:19px">21</div>
<div class="ab" style="left:737px;width:54px;top:713px;height:35px;padding-right:3px;padding-top:19px">23</div>
<div class="ab" style="left:792px;width:60px;top:713px;height:35px;padding-right:3px;padding-top:19px">25</div>
<div class="ab" style="left:853px;width:59px;top:713px;height:35px;padding-right:3px;padding-top:19px">27</div>
<div class="ab" style="left:913px;width:53px;top:713px;height:35px;padding-right:3px;padding-top:19px">29</div>
<div class="d" style="left:26px;width:80px;top:749px;height:16px;padding-right:2.4px;padding-top:1px">1</div>
<div class="d" style="left:188px;width:50px;top:749px;height:16px;padding-right:2.4px;padding-top:1px">0.25</div>
<div class="d" style="left:239px;width:45px;top:749px;height:16px;padding-right:2.4px;padding-top:1px">0.111</div>
<div class="d" style="left:285px;width:48px;top:749px;height:16px;padding-right:2.4px;padding-top:1px">0.0625</div>
<div class="d" style="left:334px;width:45px;top:749px;height:16px;padding-right:2.4px;padding-top:1px">0.04</div>
<div class="d" style="left:380px;width:59px;top:749px;height:16px;padding-right:2.4px;padding-top:1px">0.02778</div>
<div class="d" style="left:440px;width:61px;top:749px;height:16px;padding-right:2.4px;padding-top:1px">0.020408</div>
<div class="d" style="left:502px;width:55px;top:749px;height:16px;padding-right:2.4px;padding-top:1px">0.01563</div>
<div class="d" style="left:558px;width:61px;top:749px;height:16px;padding-right:2.4px;padding-top:1px">0.012346</div>
<div class="d" style="left:620px;width:48px;top:749px;height:16px;padding-right:2.4px;padding-top:1px">0.01</div>
<div class="d" style="left:669px;width:67px;top:749px;height:16px;padding-right:2.4px;padding-top:1px">0.0082645</div>
<div class="d" style="left:737px;width:54px;top:749px;height:16px;padding-right:2.4px;padding-top:1px">0.00694</div>
<div class="d" style="left:792px;width:60px;top:749px;height:16px;padding-right:2.4px;padding-top:1px">0.00592</div>
<div class="d" style="left:853px;width:59px;top:749px;height:16px;padding-right:2.4px;padding-top:1px">0.0051</div>
<div class="d" style="left:913px;width:53px;top:749px;height:16px;padding-right:2.4px;padding-top:1px">0.00444</div>
<div class="d" style="left:26px;width:80px;top:766px;height:16px;padding-right:2.4px;padding-top:1px">2</div>
<div class="y" style="left:187px;top:765px;width:52px;height:18px"></div>
<div class="d" style="left:188px;width:50px;top:766px;height:16px;padding-right:2.4px;padding-top:1px">0.5</div>
<div class="d" style="left:239px;width:45px;top:766px;height:16px;padding-right:2.4px;padding-top:1px">0.222</div>
<div class="d" style="left:285px;width:48px;top:766px;height:16px;padding-right:2.4px;padding-top:1px">0.125</div>
<div class="d" style="left:334px;width:45px;top:766px;height:16px;padding-right:2.4px;padding-top:1px">0.08</div>
<div class="d" style="left:380px;width:59px;top:766px;height:16px;padding-right:2.4px;padding-top:1px">0.05556</div>
<div class="d" style="left:440px;width:61px;top:766px;height:16px;padding-right:2.4px;padding-top:1px">0.040816</div>
<div class="d" style="left:502px;width:55px;top:766px;height:16px;padding-right:2.4px;padding-top:1px">0.03125</div>
<div class="d" style="left:558px;width:61px;top:766px;height:16px;padding-right:2.4px;padding-top:1px">0.024691</div>
<div class="d" style="left:620px;width:48px;top:766px;height:16px;padding-right:2.4px;padding-top:1px">0.02</div>
<div class="d" style="left:669px;width:67px;top:766px;height:16px;padding-right:2.4px;padding-top:1px">0.0165289</div>
<div class="d" style="left:737px;width:54px;top:766px;height:16px;padding-right:2.4px;padding-top:1px">0.01389</div>
<div class="d" style="left:792px;width:60px;top:766px;height:16px;padding-right:2.4px;padding-top:1px">0.01183</div>
<div class="d" style="left:853px;width:59px;top:766px;height:16px;padding-right:2.4px;padding-top:1px">0.0102</div>
<div class="d" style="left:913px;width:53px;top:766px;height:16px;padding-right:2.4px;padding-top:1px">0.00889</div>
<div class="d" style="left:26px;width:80px;top:783px;height:16px;padding-right:2.4px;padding-top:1px">3</div>
<div class="d" style="left:188px;width:50px;top:783px;height:16px;padding-right:2.4px;padding-top:1px">0.25</div>
<div class="y" style="left:238px;top:782px;width:47px;height:18px"></div>
<div class="d" style="left:239px;width:45px;top:783px;height:16px;padding-right:2.4px;padding-top:1px">0.333</div>
<div class="d" style="left:285px;width:48px;top:783px;height:16px;padding-right:2.4px;padding-top:1px">0.1875</div>
<div class="d" style="left:334px;width:45px;top:783px;height:16px;padding-right:2.4px;padding-top:1px">0.12</div>
<div class="d" style="left:380px;width:59px;top:783px;height:16px;padding-right:2.4px;padding-top:1px">0.08333</div>
<div class="d" style="left:440px;width:61px;top:783px;height:16px;padding-right:2.4px;padding-top:1px">0.061224</div>
<div class="d" style="left:502px;width:55px;top:783px;height:16px;padding-right:2.4px;padding-top:1px">0.04688</div>
<div class="d" style="left:558px;width:61px;top:783px;height:16px;padding-right:2.4px;padding-top:1px">0.037037</div>
<div class="d" style="left:620px;width:48px;top:783px;height:16px;padding-right:2.4px;padding-top:1px">0.03</div>
<div class="d" style="left:669px;width:67px;top:783px;height:16px;padding-right:2.4px;padding-top:1px">0.0247934</div>
<div class="d" style="left:737px;width:54px;top:783px;height:16px;padding-right:2.4px;padding-top:1px">0.02083</div>
<div class="d" style="left:792px;width:60px;top:783px;height:16px;padding-right:2.4px;padding-top:1px">0.01775</div>
<div class="d" style="left:853px;width:59px;top:783px;height:16px;padding-right:2.4px;padding-top:1px">0.01531</div>
<div class="d" style="left:913px;width:53px;top:783px;height:16px;padding-right:2.4px;padding-top:1px">0.01333</div>
<div class="d" style="left:26px;width:80px;top:800px;height:16px;padding-right:2.4px;padding-top:1px">4</div>
<div class="d" style="left:239px;width:45px;top:800px;height:16px;padding-right:2.4px;padding-top:1px">0.222</div>
<div class="y" style="left:284px;top:799px;width:50px;height:18px"></div>
<div class="d" style="left:285px;width:48px;top:800px;height:16px;padding-right:2.4px;padding-top:1px">0.25</div>
<div class="d" style="left:334px;width:45px;top:800px;height:16px;padding-right:2.4px;padding-top:1px">0.16</div>
<div class="d" style="left:380px;width:59px;top:800px;height:16px;padding-right:2.4px;padding-top:1px">0.11111</div>
<div class="d" style="left:440px;width:61px;top:800px;height:16px;padding-right:2.4px;padding-top:1px">0.081633</div>
<div class="d" style="left:502px;width:55px;top:800px;height:16px;padding-right:2.4px;padding-top:1px">0.0625</div>
<div class="d" style="left:558px;width:61px;top:800px;height:16px;padding-right:2.4px;padding-top:1px">0.049383</div>
<div class="d" style="left:620px;width:48px;top:800px;height:16px;padding-right:2.4px;padding-top:1px">0.04</div>
<div class="d" style="left:669px;width:67px;top:800px;height:16px;padding-right:2.4px;padding-top:1px">0.0330579</div>
<div class="d" style="left:737px;width:54px;top:800px;height:16px;padding-right:2.4px;padding-top:1px">0.02778</div>
<div class="d" style="left:792px;width:60px;top:800px;height:16px;padding-right:2.4px;padding-top:1px">0.02367</div>
<div class="d" style="left:853px;width:59px;top:800px;height:16px;padding-right:2.4px;padding-top:1px">0.02041</div>
<div class="d" style="left:913px;width:53px;top:800px;height:16px;padding-right:2.4px;padding-top:1px">0.01778</div>
<div class="d" style="left:26px;width:80px;top:817px;height:16px;padding-right:2.4px;padding-top:1px">5</div>
<div class="d" style="left:239px;width:45px;top:817px;height:16px;padding-right:2.4px;padding-top:1px">0.111</div>
<div class="d" style="left:285px;width:48px;top:817px;height:16px;padding-right:2.4px;padding-top:1px">0.1875</div>
<div class="y" style="left:333px;top:816px;width:47px;height:18px"></div>
<div class="d" style="left:334px;width:45px;top:817px;height:16px;padding-right:2.4px;padding-top:1px">0.2</div>
<div class="d" style="left:380px;width:59px;top:817px;height:16px;padding-right:2.4px;padding-top:1px">0.13889</div>
<div class="d" style="left:440px;width:61px;top:817px;height:16px;padding-right:2.4px;padding-top:1px">0.102041</div>
<div class="d" style="left:502px;width:55px;top:817px;height:16px;padding-right:2.4px;padding-top:1px">0.07813</div>
<div class="d" style="left:558px;width:61px;top:817px;height:16px;padding-right:2.4px;padding-top:1px">0.061728</div>
<div class="d" style="left:620px;width:48px;top:817px;height:16px;padding-right:2.4px;padding-top:1px">0.05</div>
<div class="d" style="left:669px;width:67px;top:817px;height:16px;padding-right:2.4px;padding-top:1px">0.0413223</div>
<div class="d" style="left:737px;width:54px;top:817px;height:16px;padding-right:2.4px;padding-top:1px">0.03472</div>
<div class="d" style="left:792px;width:60px;top:817px;height:16px;padding-right:2.4px;padding-top:1px">0.02959</div>
<div class="d" style="left:853px;width:59px;top:817px;height:16px;padding-right:2.4px;padding-top:1px">0.02551</div>
<div class="d" style="left:913px;width:53px;top:817px;height:16px;padding-right:2.4px;padding-top:1px">0.02222</div>
<div class="d" style="left:26px;width:80px;top:834px;height:16px;padding-right:2.4px;padding-top:1px">6</div>
<div class="d" style="left:285px;width:48px;top:834px;height:16px;padding-right:2.4px;padding-top:1px">0.125</div>
<div class="d" style="left:334px;width:45px;top:834px;height:16px;padding-right:2.4px;padding-top:1px">0.16</div>
<div class="y" style="left:379px;top:833px;width:61px;height:18px"></div>
<div class="d" style="left:380px;width:59px;top:834px;height:16px;padding-right:2.4px;padding-top:1px">0.16667</div>
<div class="d" style="left:440px;width:61px;top:834px;height:16px;padding-right:2.4px;padding-top:1px">0.122449</div>
<div class="d" style="left:502px;width:55px;top:834px;height:16px;padding-right:2.4px;padding-top:1px">0.09375</div>
<div class="d" style="left:558px;width:61px;top:834px;height:16px;padding-right:2.4px;padding-top:1px">0.074074</div>
<div class="d" style="left:620px;width:48px;top:834px;height:16px;padding-right:2.4px;padding-top:1px">0.06</div>
<div class="d" style="left:669px;width:67px;top:834px;height:16px;padding-right:2.4px;padding-top:1px">0.0495868</div>
<div class="d" style="left:737px;width:54px;top:834px;height:16px;padding-right:2.4px;padding-top:1px">0.04167</div>
<div class="d" style="left:792px;width:60px;top:834px;height:16px;padding-right:2.4px;padding-top:1px">0.03550</div>
<div class="d" style="left:853px;width:59px;top:834px;height:16px;padding-right:2.4px;padding-top:1px">0.03061</div>
<div class="d" style="left:913px;width:53px;top:834px;height:16px;padding-right:2.4px;padding-top:1px">0.02667</div>
<div class="d" style="left:26px;width:80px;top:851px;height:16px;padding-right:2.4px;padding-top:1px">7</div>
<div class="d" style="left:285px;width:48px;top:851px;height:16px;padding-right:2.4px;padding-top:1px">0.0625</div>
<div class="d" style="left:334px;width:45px;top:851px;height:16px;padding-right:2.4px;padding-top:1px">0.12</div>
<div class="d" style="left:380px;width:59px;top:851px;height:16px;padding-right:2.4px;padding-top:1px">0.13889</div>
<div class="y" style="left:439px;top:850px;width:63px;height:18px"></div>
<div class="d" style="left:440px;width:61px;top:851px;height:16px;padding-right:2.4px;padding-top:1px">0.142857</div>
<div class="d" style="left:502px;width:55px;top:851px;height:16px;padding-right:2.4px;padding-top:1px">0.10938</div>
<div class="d" style="left:558px;width:61px;top:851px;height:16px;padding-right:2.4px;padding-top:1px">0.08642</div>
<div class="d" style="left:620px;width:48px;top:851px;height:16px;padding-right:2.4px;padding-top:1px">0.07</div>
<div class="d" style="left:669px;width:67px;top:851px;height:16px;padding-right:2.4px;padding-top:1px">0.0578512</div>
<div class="d" style="left:737px;width:54px;top:851px;height:16px;padding-right:2.4px;padding-top:1px">0.04861</div>
<div class="d" style="left:792px;width:60px;top:851px;height:16px;padding-right:2.4px;padding-top:1px">0.04142</div>
<div class="d" style="left:853px;width:59px;top:851px;height:16px;padding-right:2.4px;padding-top:1px">0.03571</div>
<div class="d" style="left:913px;width:53px;top:851px;height:16px;padding-right:2.4px;padding-top:1px">0.03111</div>
</body></html>
